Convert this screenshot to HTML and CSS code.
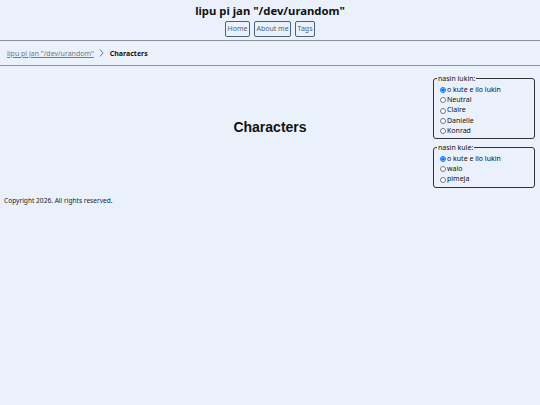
FILE: index.html
```html
<!DOCTYPE html>
<html>
<head>
<meta charset="utf-8">
<link rel="stylesheet" href="styles.css">
</head>
<body>
<header class="site-header">
  <div class="site-title">lipu pi jan "/dev/urandom"</div>
  <nav class="site-nav">
    <a class="nav-btn" href="#">Home</a>
    <a class="nav-btn" href="#">About me</a>
    <a class="nav-btn" href="#">Tags</a>
  </nav>
</header>
<div class="crumbs">
  <a class="crumb-link" href="#">lipu pi jan "/dev/urandom"</a>
  <svg class="crumb-sep" width="5" height="8" viewBox="0 0 5 8"><path d="M1 0.5 L4 4 L1 7.5" fill="none" stroke="#555" stroke-width="0.8"/></svg>
  <span class="crumb-current">Characters</span>
</div>
<div class="layout">
  <div class="spacer"></div>
  <main class="main">
    <h1 class="page-title">Characters</h1>
  </main>
  <aside class="side">
    <fieldset class="opts">
      <legend>nasin lukin:</legend>
      <label class="opt"><input type="radio" name="a" checked>o kute e ilo lukin</label>
      <label class="opt"><input type="radio" name="a">Neutral</label>
      <label class="opt"><input type="radio" name="a">Claire</label>
      <label class="opt"><input type="radio" name="a">Danielle</label>
      <label class="opt"><input type="radio" name="a">Konrad</label>
    </fieldset>
    <fieldset class="opts">
      <legend>nasin kule:</legend>
      <label class="opt"><input type="radio" name="b" checked>o kute e ilo lukin</label>
      <label class="opt"><input type="radio" name="b">walo</label>
      <label class="opt"><input type="radio" name="b">pimeja</label>
    </fieldset>
  </aside>
</div>
<footer class="footer">Copyright 2026. All rights reserved.</footer>
</body>
</html>
```
FILE: styles.css
```css
html, body {
  margin: 0;
  padding: 0;
  background: #eaf1fb;
  font-family: "Noto Sans", sans-serif;
  color: #111;
}
.site-header {
  display: flex;
  flex-direction: column;
  align-items: center;
  padding-top: 2px;
  height: 38px;
  border-bottom: 1px solid #8a9098;
}
.site-title {
  font-weight: bold;
  font-size: 11.3px;
  line-height: 18px;
}
.site-nav {
  display: flex;
  gap: 4px;
  margin-top: 1px;
}
.nav-btn {
  font-size: 7px;
  line-height: 12px;
  padding: 1px 1.5px;
  color: #4b6378;
  text-decoration: none;
  border: 1px solid #4b6378;
  border-radius: 2px;
}
.crumbs {
  display: flex;
  align-items: center;
  height: 24px;
  padding-left: 7px;
  font-size: 7px;
  border-bottom: 1px solid #8a9098;
}
.crumb-link {
  color: #777;
  text-decoration: underline;
}
.crumb-sep {
  margin: 0 6px 0 5px;
}
.crumb-current {
  font-weight: bold;
}
.layout {
  display: grid;
  grid-template-columns: 108px 1fr 108px;
  align-items: center;
  padding-top: 8px;
}
.main {
  text-align: center;
}
.page-title {
  margin: 0 0 7px;
  font-family: "Liberation Sans", Arial, sans-serif;
  font-size: 14px;
  font-weight: bold;
}
.side {
  display: flex;
  flex-direction: column;
  gap: 4px;
  padding-right: 5px;
  padding-left: 1px;
}
.opts {
  margin: 0;
  padding: 2px 4px 2px 5px;
  border: 1px solid #333;
  border-radius: 3px;
  display: flex;
  flex-direction: column;
}
.opts legend {
  font-size: 7px;
  padding: 0 1px;
  margin-left: -2px;
  line-height: 9px;
}
.opt {
  display: flex;
  align-items: center;
  font-size: 7px;
  line-height: 10.2px;
  color: #111;
}
.opt input {
  width: 6px;
  height: 6px;
  margin: 0 1px 0 1px;
}
.footer {
  font-size: 6.6px;
  padding: 8px 0 0 4px;
  color: #222;
}
```
